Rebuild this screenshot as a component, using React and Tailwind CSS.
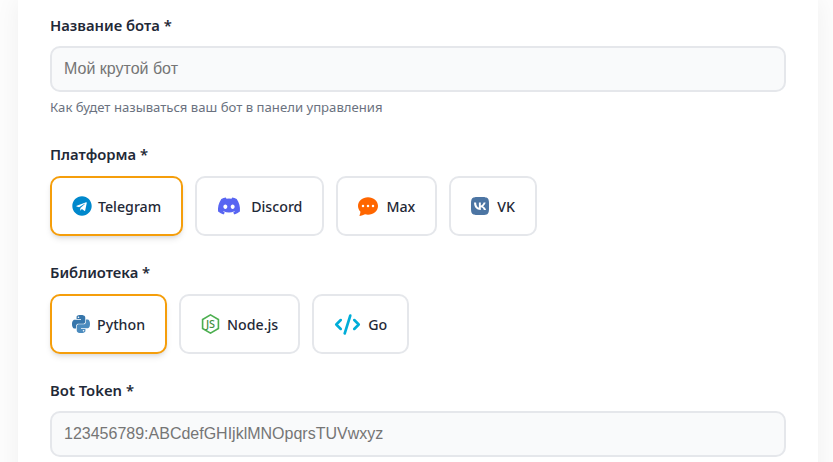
import { FaTelegram, FaDiscord } from 'react-icons/fa';
import { BsChatDotsFill } from 'react-icons/bs';
import { SiVk } from 'react-icons/si';
import { CodeXml } from 'lucide-react';

const PythonIcon = () => (
  <svg viewBox="1 1 22 22" className="h-[18px] w-[18px]">
    <path fill="#3776ab" d="M11.9 1C6.3 1 6.6 3.4 6.6 3.4v2.5h5.4v.8H4.5S1 6.3 1 12s3.1 5.5 3.1 5.5H6v-2.700s-.1-3.100 3-3.100h5.300s2.900 0 2.900-2.800V4.100S17.700 1 11.900 1zM8.900 2.800a1 1 0 1 1 0 2 1 1 0 0 1 0-2z" />
    <path fill="#4b8bbe" d="M12.100 23c5.600 0 5.300-2.400 5.300-2.400v-2.500H12v-.8h7.500S23 17.700 23 12s-3.100-5.500-3.100-5.500H18v2.700s.1 3.100-3 3.100H9.700s-2.900 0-2.900 2.800v4.800S6.300 23 12.100 23zm3-1.800a1 1 0 1 1 0-2 1 1 0 0 1 0 2z" />
  </svg>
);

const NodeIcon = () => (
  <svg viewBox="2 1 20 22" className="h-5 w-[19px]">
    <path fill="none" stroke="#4caf50" strokeWidth="1.8" d="M12 2l8.700 5v10L12 22l-8.700-5V7z" />
    <text x="12" y="16.500" textAnchor="middle" fontSize="12" fontWeight="500" fontFamily="'Noto Sans', sans-serif" fill="#3f8f3f">JS</text>
  </svg>
);

const platforms = [
  { name: 'Telegram', icon: <FaTelegram className="-mr-px h-5 w-5 text-[#0088cc]" />, active: true },
  { name: 'Discord', icon: <FaDiscord className="mr-[3px] h-6 w-6 text-[#5865f2]" /> },
  { name: 'Max', icon: <BsChatDotsFill className="mr-px h-5 w-5 text-[#ff6600]" /> },
  { name: 'VK', icon: <SiVk className="mr-px h-[18px] w-[18px] text-[#4c75a3]" /> },
];

const libraries = [
  { name: 'Python', icon: <PythonIcon />, active: true },
  { name: 'Node.js', icon: <NodeIcon /> },
  { name: 'Go', icon: <CodeXml className="h-[27px] w-[27px] text-[#00add8]" strokeWidth={2.3} /> },
];

const OptionButton = ({ item }) => (
  <button
    className={
      item.active
        ? 'flex h-[60px] items-center gap-[7px] rounded-[10px] border-2 border-[#f59e0b] bg-white px-5 text-[14.2px] font-medium text-[#1f2937] shadow-md'
        : 'flex h-[60px] items-center gap-[7px] rounded-[10px] border-2 border-[#e5e7eb] bg-white px-5 text-[14.2px] font-medium text-[#1f2937]'
    }
  >
    {item.icon}
    <span className="pt-[2px]">{item.name}</span>
  </button>
);

const Label = ({ children }) => (
  <div className="h-[22px] text-[14.8px] leading-[21px] font-semibold text-[#1f2937]">{children}</div>
);

const TextInput = ({ placeholder }) => (
  <input
    readOnly
    placeholder={placeholder}
    className="mt-[9px] h-[46px] w-full rounded-[10px] border-2 border-[#e5e7eb] bg-[#f9fafb] px-3 font-['Liberation_Sans',sans-serif] text-base placeholder:text-[#757575]"
  />
);

export default function App() {
  return (
    <div className="h-[462px] overflow-hidden bg-[#fdfdfd] pl-[18px] font-['Noto_Sans',sans-serif]">
      <div className="h-[520px] w-[800px] bg-white px-8 pt-[15px] shadow-[0_0_24px_rgba(0,0,0,0.06)]">
        <Label>Название бота *</Label>
        <TextInput placeholder="Мой крутой бот" />
        <p className="mt-[6px] mb-[28px] h-[18px] text-[13.15px] leading-[18px] text-[#6b7280]">Как будет называться ваш бот в панели управления</p>
        <Label>Платформа *</Label>
        <div className="mt-[10px] mb-[26px] flex gap-3">
          {platforms.map((item) => <OptionButton key={item.name} item={item} />)}
        </div>
        <Label>Библиотека *</Label>
        <div className="mt-[10px] mb-[26px] flex gap-3">
          {libraries.map((item) => <OptionButton key={item.name} item={item} />)}
        </div>
        <Label>Bot Token *</Label>
        <TextInput placeholder="123456789:ABCdefGHIjklMNOpqrsTUVwxyz" />
      </div>
    </div>
  );
}
